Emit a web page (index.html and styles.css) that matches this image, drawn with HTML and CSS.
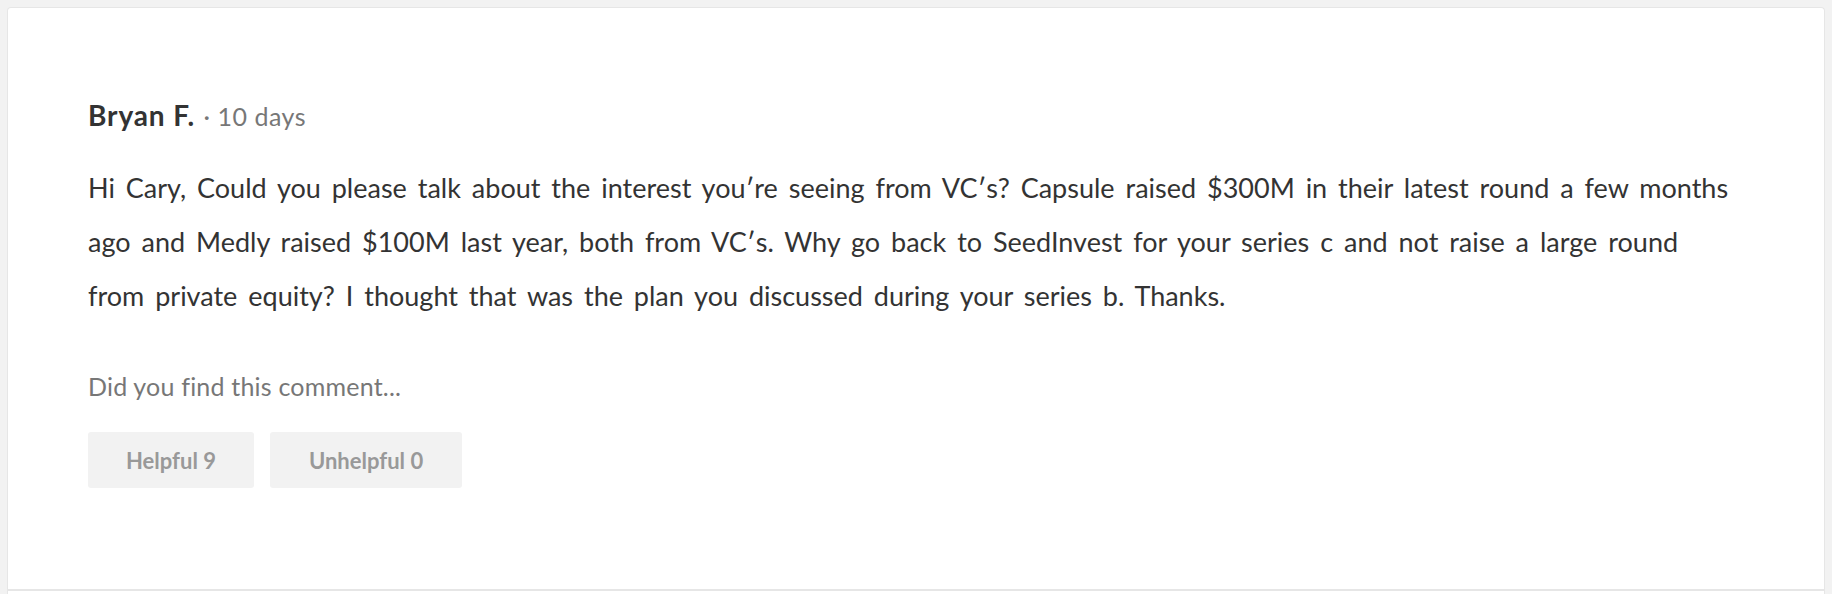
FILE: index.html
```html
<!DOCTYPE html>
<html lang="en">
<head>
  <meta charset="UTF-8" />
  <title>Comments</title>
  <link rel="stylesheet" href="styles.css">
</head>
<body>
  <div class="comments">
    <div class="comment">
      <div class="comment-head">
        <span class="author">Bryan F.</span>
        <span class="meta">· 10 days</span>
      </div>
      <p class="comment-body">Hi Cary, Could you please talk about the interest you′re seeing from VC′s? Capsule raised $300M in their latest round a few months ago and Medly raised $100M last year, both from VC′s. Why go back to SeedInvest for your series c and not raise a large round from private equity? I thought that was the plan you discussed during your series b. Thanks.</p>
      <div class="vote-label">Did you find this comment...</div>
      <div class="votes">
        <button class="vote">Helpful 9</button>
        <button class="vote">Unhelpful 0</button>
      </div>
    </div>
    <div class="comment"></div>
  </div>
</body>
</html>
```

FILE: styles.css
```css
body {
  margin: 0;
  padding: 7px 7px 0 7px;
  background-color: #f2f2f2;
  font-family: Lato, sans-serif;
  color: #333;
}
.comments {
  background-color: white;
  border: 1px solid #e6e6e6;
  border-bottom: none;
  border-radius: 4px 4px 0 0;
}
.comment {
  padding: 91px 80px 101px 80px;
  border-bottom: 2px solid #e6e6e6;
}
.comment-head {
  font-size: 25px;
  line-height: 32px;
}
.author {
  font-weight: bold;
  font-size: 28px;
  letter-spacing: 0.9px;
  color: #333;
}
.meta {
  color: #777;
  letter-spacing: 0.5px;
  margin-left: 2px;
}
.comment-body {
  margin: 29px 0 0 0;
  font-size: 27px;
  letter-spacing: 0;
  word-spacing: 4px;
  line-height: 54px;
  color: #333;
}
.vote-label {
  margin-top: 48px;
  font-size: 25px;
  letter-spacing: 0.2px;
  color: #777;
}
.votes {
  display: flex;
  gap: 16px;
  margin-top: 31px;
}
.vote {
  height: 56px;
  padding: 0 38px;
  border: none;
  border-radius: 3px;
  background-color: #f2f2f2;
  color: #999;
  font-family: Lato, sans-serif;
  font-size: 22px;
  font-weight: bold;
}
.vote:last-child {
  padding: 0 39px;
}
```
